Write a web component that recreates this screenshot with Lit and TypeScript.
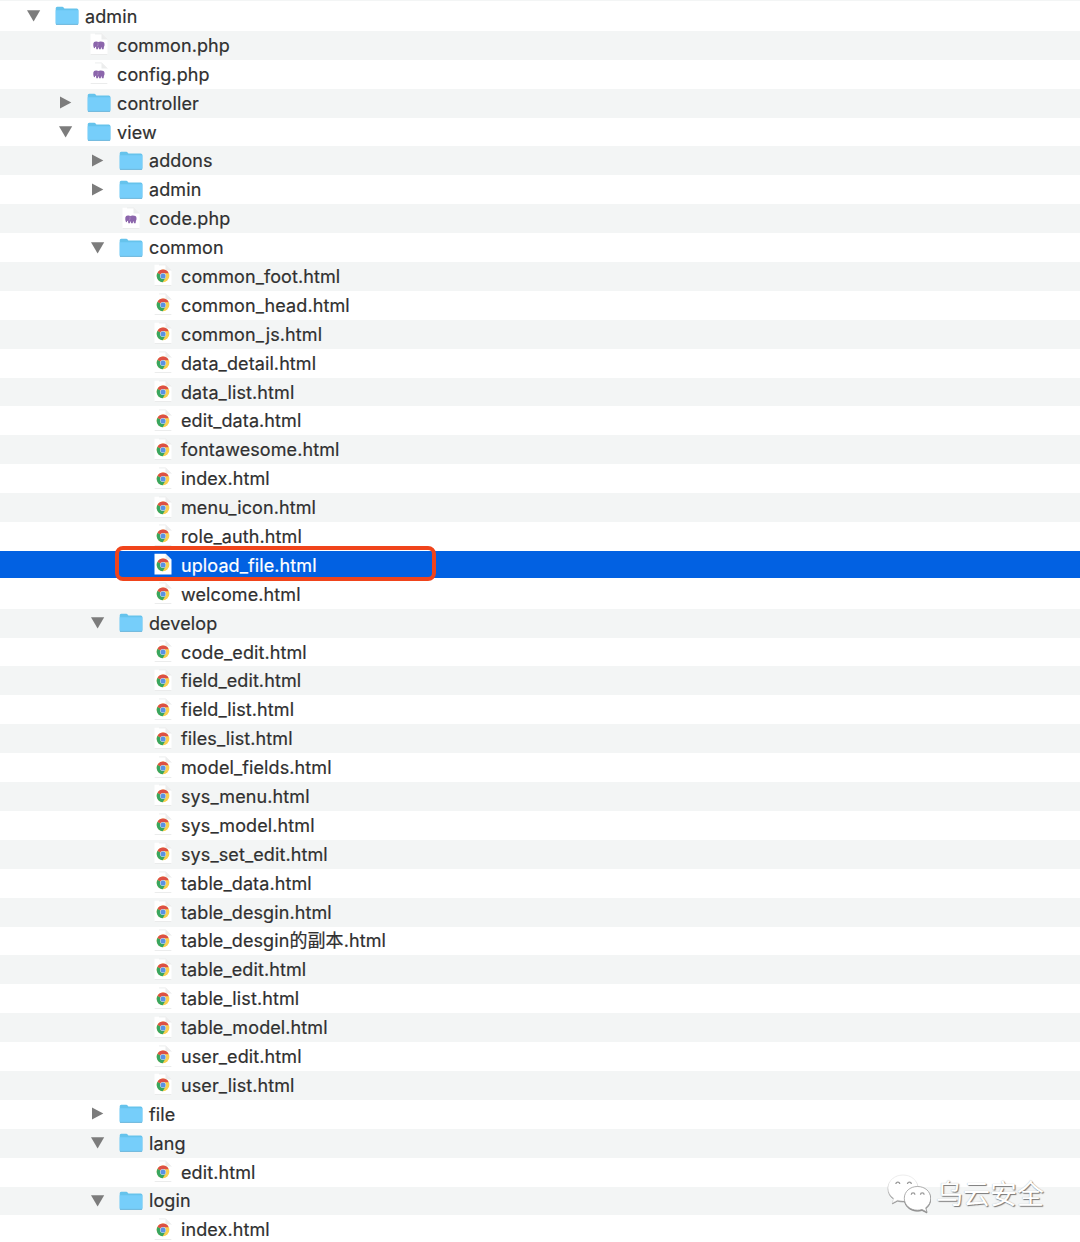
import { LitElement, html, css, svg, nothing } from "lit";
import { customElement, property } from "lit/decorators.js";
import { classMap } from "lit/directives/class-map.js";

type Kind = "open" | "closed" | "php" | "html";
type Entry = [depth: number, kind: Kind, name: string];

const pages = (depth: number, names: string): Entry[] =>
  names.split(" ").map((n) => [depth, "html", n + ".html"] as Entry);

const entries: Entry[] = [
  [0, "open", "admin"],
  [1, "php", "common.php"],
  [1, "php", "config.php"],
  [1, "closed", "controller"],
  [1, "open", "view"],
  [2, "closed", "addons"],
  [2, "closed", "admin"],
  [2, "php", "code.php"],
  [2, "open", "common"],
  ...pages(3, "common_foot common_head common_js data_detail data_list edit_data fontawesome index menu_icon role_auth upload_file welcome"),
  [2, "open", "develop"],
  ...pages(3, "code_edit field_edit field_list files_list model_fields sys_menu sys_model sys_set_edit table_data table_desgin table_desgin的副本 table_edit table_list table_model user_edit user_list"),
  [2, "closed", "file"],
  [2, "open", "lang"],
  ...pages(3, "edit"),
  [2, "open", "login"],
  ...pages(3, "index"),
];

const folder = svg`
  <path d="M.7 17.8V2.200Q.7.7 2.200.7h5.100q.8 0 1.300.7l.8 1.200h12.400q1.600 0 1.600 1.500v13.700q0 1-1 1H1.700q-1 0-1-1z" fill="#66c3ec"/>
  <path d="M.7 4.200h22.700v12.900q0 .8-1 .8H1.700q-1 0-1-.8z" fill="#76cefa"/>
  <path d="M1 18.400h22" stroke="#6fb4d8" stroke-width=".8"/>`;

const sheet = svg`
  <path d="M3.500.8h11.200l5.800 5.800v15H3.500z" fill="#fff"/>
  <path class="edge" d="M3.700 21.500h16.600" stroke="#e6e7e7" stroke-width=".8"/>
  <path class="edge" d="M8 .9h6.700l5.600 5.600" fill="none" stroke="#e9eaea" stroke-width=".8"/>
  <path d="M14.500 1l5.700 5.600h-5.700z" fill="#eceded"/>`;

const elephant = svg`
  <path d="M6.300 10.600q.4-2 2.500-2.100 1.500-.3 2.500.4 1-.5 2.600-.4 3.300 0 3.600 2.300.3 2-.6 3.200l-.3 2.300h-1.700l-.2-1.800-.7.1-.2 1.700h-1.800l-.3-1.700-.6-.1-.2 1.800H9.300l-.3-2.300-.9-.3-.1 1.400-1 .2q-1-1.900-.7-4.700z" fill="#8c66ac"/>
  <path d="M11 9.500v3l-1.300.7" fill="none" stroke="#b796ca" stroke-width=".6"/>`;

const chrome = svg`
  <g transform="translate(12 11.900)">
    <circle r="6.300" fill="#f9d04f"/>
    <path d="M-5.460-3.150A6.300 6.300 0 0 0-.3 6.300L2.600 1.500 0 0z" fill="#38a660"/>
    <path d="M0 0L-5.460-3.150A6.300 6.300 0 0 1 5.700-2.700H0z" fill="#dd5044"/>
    <circle r="3" fill="#dbe6f0"/>
    <circle r="2.500" fill="#5a92e2"/>
  </g>`;

@customElement("tree-row")
class TreeRow extends LitElement {
  @property({ attribute: false }) entry!: Entry;
  @property({ type: Boolean, reflect: true }) selected = false;

  static styles = css`
    :host { display: block; height: 28.9px; color: #303030; }
    .row { display: flex; align-items: center; height: 100%; box-sizing: border-box; }
    .arrow { width: 14px; height: 14px; flex: none; margin-right: 14px; fill: #7c7c7c; }
    .icon { width: 24px; height: 24px; flex: none; margin-right: 6px; }
    .icon.folder { height: 20px; }
    .name { white-space: nowrap; line-height: 28px; padding-top: 1px; -webkit-text-stroke: .2px currentColor; }
    .marked .edge { display: none; }
    .marked { color: #fff; }
  `;

  render() {
    const [depth, kind, name] = this.entry;
    const dir = kind === "open" || kind === "closed";
    return html`
      <div class=${classMap({ row: true, marked: this.selected })} style="padding-left:${27 + depth * 32}px">
        <svg class="arrow" viewBox="0 0 14 14">
          ${kind === "open" ? svg`<path d="M0 1.200h13.200L6.600 12.400z"/>` : nothing}
          ${kind === "closed" ? svg`<path d="M1 .400v12.200L12.300 6.500z"/>` : nothing}
        </svg>
        <svg class=${classMap({ icon: true, folder: dir })} viewBox=${dir ? "0 0 24 20" : "0 0 24 24"}>
          ${dir ? folder : sheet}
          ${kind === "php" ? elephant : nothing}
          ${kind === "html" ? chrome : nothing}
        </svg>
        <span class="name">${name}</span>
      </div>`;
  }
}

@customElement("app-root")
class AppRoot extends LitElement {
  static styles = css`
    :host {
      display: block; position: relative; width: 1080px; height: 1242px; overflow: hidden;
      background: #fff; font: 18px/28px Inter, "Noto Sans CJK SC", sans-serif; letter-spacing: 0.1px;
    }
    .lead { height: 2px; background: linear-gradient(#f3f5f5 1.500px, #fff 1.500px); }
    tree-row:nth-child(odd) { background: #f3f5f5; }
    tree-row:nth-child(even) { background: #fff; }
    tree-row[selected] { background: linear-gradient(#0261e2 27.200px, #fff 27.200px); }
    .callout {
      position: absolute; left: 114.500px; top: 545.500px; width: 321px; height: 35.500px;
      box-sizing: border-box; border: 4.500px solid #f0441b; border-radius: 8px;
    }
    .watermark {
      position: absolute; left: 886px; top: 1171px; display: flex; align-items: center; gap: 5px;
      color: #fff; font: 27px/42px "Noto Sans CJK SC", sans-serif; letter-spacing: 0;
      text-shadow: 1px 1px 1px #777, 0 0 1px #aaa;
    }
    .watermark span { padding-top: 1px; }
    .bubbles { width: 45px; height: 42px; filter: drop-shadow(.6px 1px .5px #888); }
  `;

  render() {
    return html`
      <div class="lead"></div>
      ${entries.map((e) => html`<tree-row .entry=${e} ?selected=${e[2] === "upload_file.html"}></tree-row>`)}
      <div class="callout"></div>
      <div class="watermark">
        <svg class="bubbles" viewBox="0 0 45 42">
          <path d="M17 3C8.500 3 2 8.700 2 16c0 4.300 2.200 8 5.700 10.300L6.300 31l5.300-2.800q2.600.8 5.400.8C25.500 29 32 23.300 32 16S25.500 3 17 3z" fill="#fff" stroke="#ddd" stroke-width=".5"/>
          <path d="M31.500 14.500c-7.400 0-13.200 5-13.200 11.800S24 38.200 31.500 38.200q2.400 0 4.500-.7l5 2.500-1.300-4.200c3.100-2.200 5-5.500 5-9.500 0-6.800-5.800-11.800-13.200-11.800z" fill="#fff" stroke="#999" stroke-width=".8"/>
          <g fill="none" stroke="#999" stroke-width="1.300">
            <path d="M9.900 12a1.900 1.900 0 0 1 3.800 0M21.500 12a1.900 1.900 0 0 1 3.800 0M25.300 22.700a1.800 1.800 0 0 1 3.600 0M34.500 22.700a1.800 1.800 0 0 1 3.600 0"/>
          </g>
        </svg>
        <span>乌云安全</span>
      </div>`;
  }
}
